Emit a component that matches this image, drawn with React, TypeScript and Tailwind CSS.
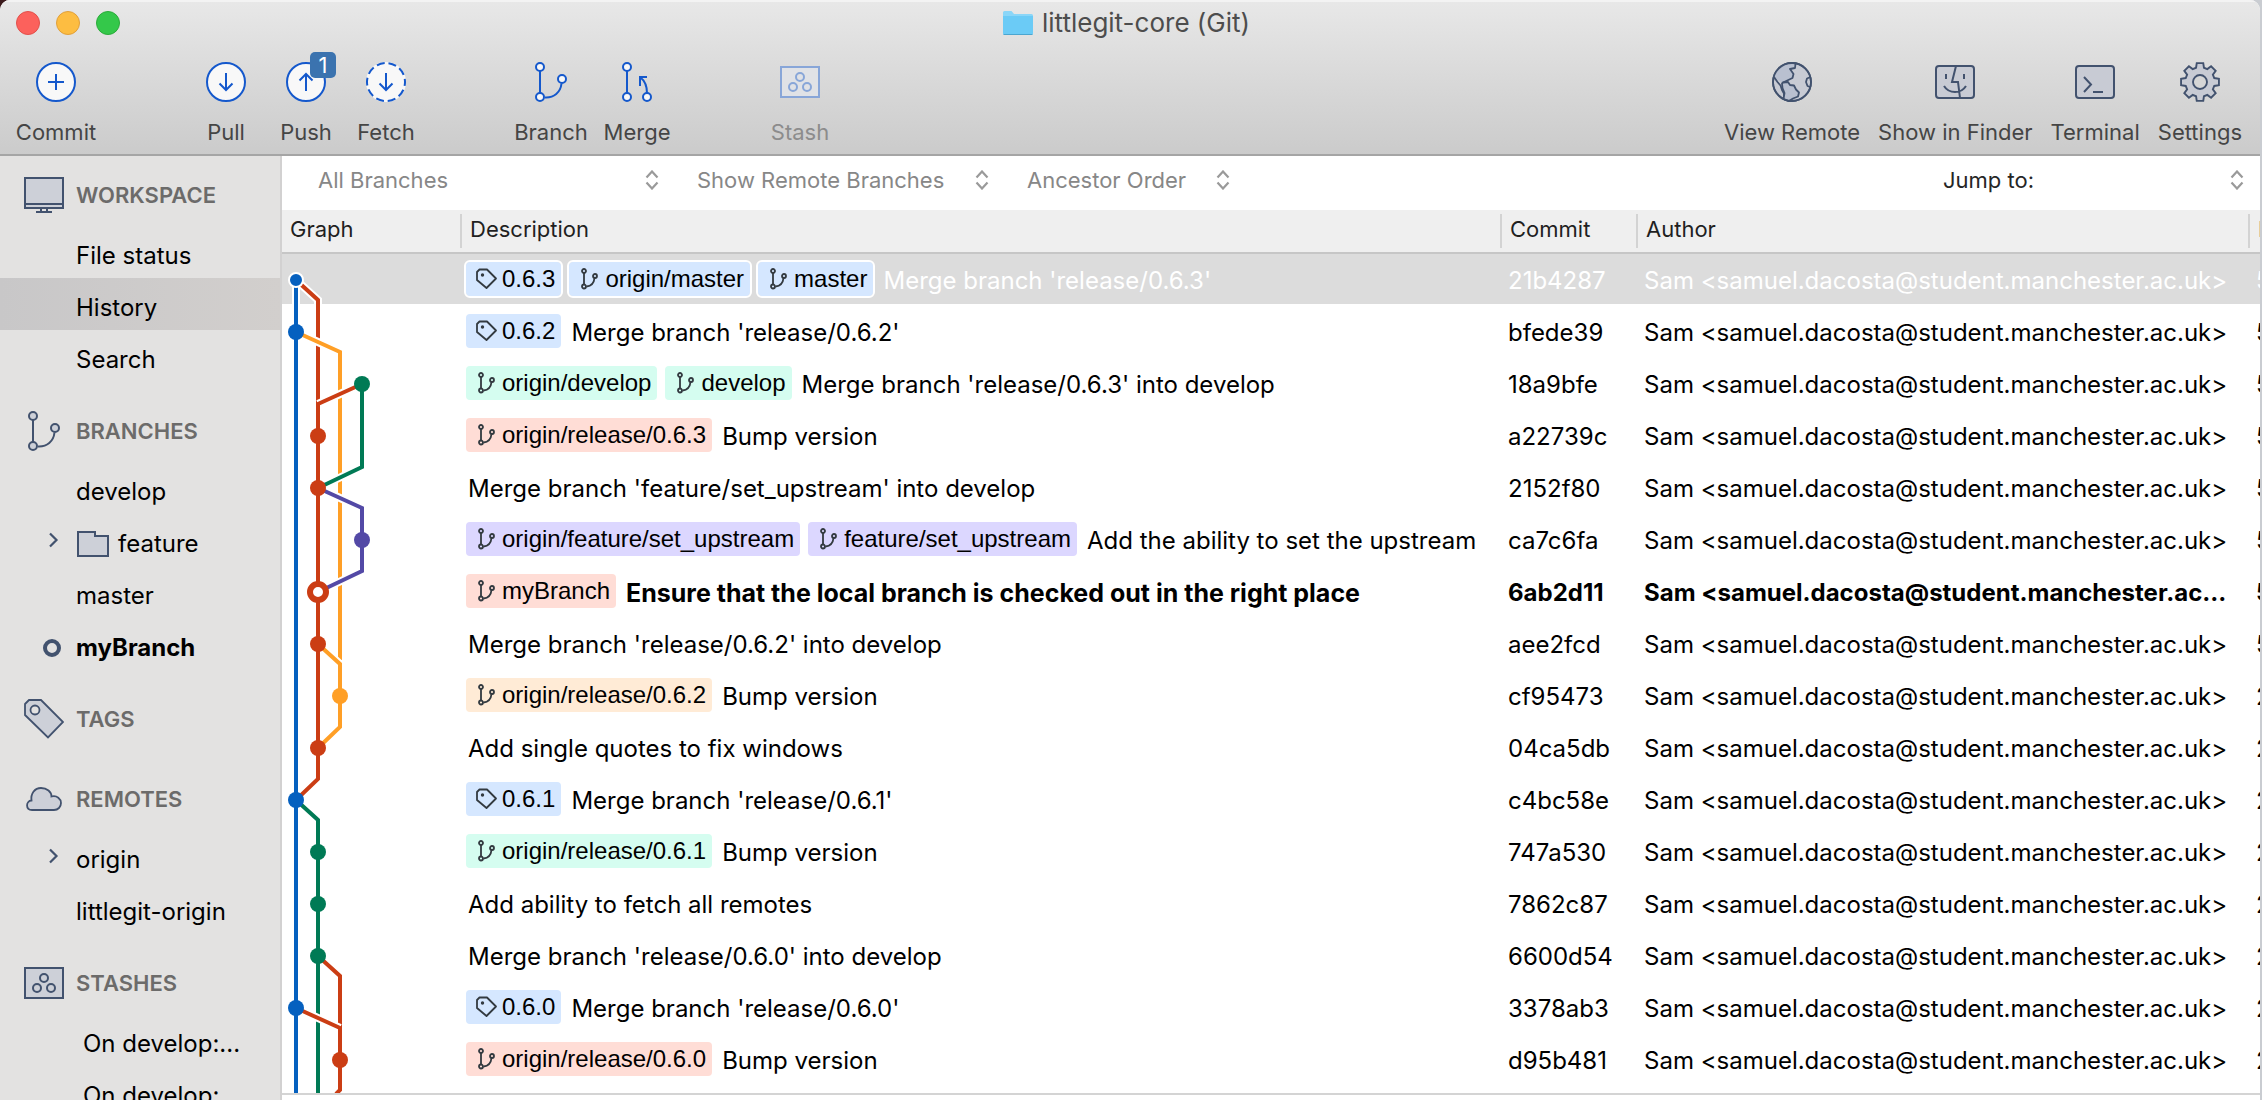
import React from "react";

type Tone = "blue" | "green" | "red" | "purple" | "orange";
type Ref = { kind: "tag" | "branch"; name: string };
type Commit = {
  refs: Ref[];
  tone?: Tone;
  message: string;
  hash: string;
  date: string;
  author?: string;
  selected?: boolean;
  head?: boolean;
};

const toneClass: Record<Tone, string> = {
  blue: "bg-[#d5e7ff]",
  green: "bg-[#d5fdf0]",
  red: "bg-[#ffddd6]",
  purple: "bg-[#dcd7ff]",
  orange: "bg-[#ffebd6]",
};

const AUTHOR = "Sam <samuel.dacosta@student.manchester.ac.uk>";
const branch = (name: string): Ref => ({ kind: "branch", name });
const tag = (name: string): Ref => ({ kind: "tag", name });

const commits: Commit[] = [
  { refs: [tag("0.6.3"), branch("origin/master"), branch("master")], tone: "blue", message: "Merge branch 'release/0.6.3'", hash: "21b4287", date: "5", selected: true },
  { refs: [tag("0.6.2")], tone: "blue", message: "Merge branch 'release/0.6.2'", hash: "bfede39", date: "5" },
  { refs: [branch("origin/develop"), branch("develop")], tone: "green", message: "Merge branch 'release/0.6.3' into develop", hash: "18a9bfe", date: "5" },
  { refs: [branch("origin/release/0.6.3")], tone: "red", message: "Bump version", hash: "a22739c", date: "5" },
  { refs: [], message: "Merge branch 'feature/set_upstream' into develop", hash: "2152f80", date: "5" },
  { refs: [branch("origin/feature/set_upstream"), branch("feature/set_upstream")], tone: "purple", message: "Add the ability to set the upstream", hash: "ca7c6fa", date: "5" },
  { refs: [branch("myBranch")], tone: "red", message: "Ensure that the local branch is checked out in the right place", hash: "6ab2d11", date: "5", author: "Sam <samuel.dacosta@student.manchester.ac...", head: true },
  { refs: [], message: "Merge branch 'release/0.6.2' into develop", hash: "aee2fcd", date: "5" },
  { refs: [branch("origin/release/0.6.2")], tone: "orange", message: "Bump version", hash: "cf95473", date: "2" },
  { refs: [], message: "Add single quotes to fix windows", hash: "04ca5db", date: "2" },
  { refs: [tag("0.6.1")], tone: "blue", message: "Merge branch 'release/0.6.1'", hash: "c4bc58e", date: "2" },
  { refs: [branch("origin/release/0.6.1")], tone: "green", message: "Bump version", hash: "747a530", date: "2" },
  { refs: [], message: "Add ability to fetch all remotes", hash: "7862c87", date: "2" },
  { refs: [], message: "Merge branch 'release/0.6.0' into develop", hash: "6600d54", date: "2" },
  { refs: [tag("0.6.0")], tone: "blue", message: "Merge branch 'release/0.6.0'", hash: "3378ab3", date: "2" },
  { refs: [branch("origin/release/0.6.0")], tone: "red", message: "Bump version", hash: "d95b481", date: "2" },
];

/* ---------- icons ---------- */

const BLUE = "#1458cc";
const SLATE = "#42526e";
const FILL = "#cdd0d8";

function CircleIcon({ d, dashed }: { d: string; dashed?: boolean }) {
  return (
    <svg width="40" height="40" viewBox="0 0 40 40" fill="none" stroke={BLUE} strokeWidth="2">
      <circle cx="20" cy="20" r="19" fill="#f8f8f8" stroke={dashed ? "#f8f8f8" : BLUE} />
      {dashed && <circle cx="20" cy="20" r="19" strokeDasharray="8 3.94" strokeDashoffset="4" />}
      <path d={d} />
    </svg>
  );
}

const PLUS = "M20 12v16M12 20h16";
const DOWN = "M20 11v17M13.500 21.500l6.500 6.500 6.500-6.500";
const UP = "M20 29v-17M13.500 18.500l6.500-6.500 6.500 6.500";

function BranchIcon({ color, fill }: { color: string; fill: string }) {
  return (
    <svg width="32" height="40" viewBox="0 0 32 40" fill="none" stroke={color} strokeWidth="2">
      <path d="M5 9v22M10 35.500c9 .5 15.500-5 16.500-14" />
      <circle cx="5" cy="5" r="4" fill={fill} />
      <circle cx="5" cy="35" r="4" fill={fill} />
      <circle cx="27" cy="17" r="4" fill={fill} />
    </svg>
  );
}

function MergeIcon() {
  return (
    <svg width="30" height="40" viewBox="0 0 30 40" fill="none" stroke={BLUE} strokeWidth="2">
      <path d="M5 9v22M25 31c0-6-2-12-6.500-15.500M18 24v-9h7" />
      <circle cx="5" cy="5" r="4" fill="#f8f8f8" />
      <circle cx="5" cy="35" r="4" fill="#f8f8f8" />
      <circle cx="25" cy="35" r="4" fill="#f8f8f8" />
    </svg>
  );
}

function StashIcon({ color, fill }: { color: string; fill: string }) {
  return (
    <svg width="40" height="32" viewBox="0 0 40 32" fill="none" stroke={color} strokeWidth="2">
      <rect x="1" y="1" width="38" height="30" fill={fill} />
      <circle cx="20" cy="11" r="4" />
      <circle cx="13" cy="21" r="4" />
      <circle cx="27" cy="21" r="4" />
    </svg>
  );
}

function GlobeIcon() {
  return (
    <svg width="40" height="40" viewBox="0 0 40 40" fill="none" stroke={SLATE} strokeWidth="1.800" strokeLinejoin="round">
      <circle cx="20" cy="20" r="19" fill="#c8cbd4" />
      <path d="M22.500 1.500l-1 5-3 1.500 3.500 4-1.500 4-9 5 2.500 1.500C9 19 4.500 18.500 2 14 5 6 12 1 22.500 1.500z" fill="#b9c0d0" stroke="none" />
      <path d="M23.500 1.500l-.5 4.500-5 1 3.500 5-1 4-9.500 4.500" />
      <path d="M2 15l3.500 5 3 3.500 1.500 4.500 2 3.500v6.500" />
      <path d="M11 20.500l5-.5 2 3 4 .5 2 4 3 3-1 4-5 2-4 2.500-5.500-2 1-6-2-5-.5-4.500z" fill="#b9c0d0" />
      <path d="M38.500 15l-3.500 1.500-1 3.500 1.500 4 2.500 1" />
      <circle cx="20" cy="20" r="19" />
    </svg>
  );
}

function FinderIcon() {
  return (
    <svg width="40" height="34" viewBox="0 0 40 34" fill="none" stroke={SLATE} strokeWidth="2">
      <rect x="1" y="1" width="38" height="32" rx="3" fill="#c8cbd4" />
      <path d="M11 9v5M29 9v5M21 1l-4 16h6l2 16M9 21c5 8 17 8 22 0" />
    </svg>
  );
}

function TerminalIcon() {
  return (
    <svg width="40" height="34" viewBox="0 0 40 34" fill="none" stroke={SLATE} strokeWidth="2">
      <rect x="1" y="1" width="38" height="32" rx="3" fill="#c8cbd4" />
      <path d="M9 12l7 7.500-7 7.500M18 27h10" />
    </svg>
  );
}

function gearPath() {
  const pts: string[] = [];
  for (let i = 0; i < 8; i++) {
    const base = (i * Math.PI) / 4;
    for (const [off, r] of [[-0.27, 14.8], [-0.17, 19.2], [0.17, 19.2], [0.27, 14.8]]) {
      pts.push(`${(20 + r * Math.sin(base + off)).toFixed(2)} ${(20 - r * Math.cos(base + off)).toFixed(2)}`);
    }
  }
  return `M${pts.join("L")}Z`;
}

function GearIcon() {
  return (
    <svg width="40" height="40" viewBox="0 0 40 40" fill="#c8cbd4" stroke={SLATE} strokeWidth="1.900">
      <path d={gearPath()} />
      <circle cx="20" cy="20" r="7" fill="#d6d6d6" />
    </svg>
  );
}

function MonitorIcon() {
  return (
    <svg width="40" height="36" viewBox="0 0 40 36" fill="none" stroke={SLATE} strokeWidth="2">
      <rect x="1" y="1" width="38" height="30" fill={FILL} />
      <path d="M1 27h38M17 31v3M23 31v3M12 35h16" />
    </svg>
  );
}

function TagIcon() {
  return (
    <svg width="40" height="40" viewBox="0 0 40 40" fill="none" stroke={SLATE} strokeWidth="1.800">
      <path d="M1 5l4-4h12l22 22-15 15.500L1 16z" fill={FILL} />
      <circle cx="11" cy="11" r="4.500" fill="#e3e2e1" />
    </svg>
  );
}

function CloudIcon() {
  return (
    <svg width="36" height="24" viewBox="0 0 36 24" fill="none" stroke={SLATE} strokeWidth="1.800">
      <path d="M5.500 13.500C4.500 7 8.500 1 15 1c6 0 10.500 4 10.500 8.500C31 8 35 12 35 16s-3 7-7 7H6c-6.500 0-6.500-9-.5-9.500z" fill={FILL} />
    </svg>
  );
}

function FolderOutline() {
  return (
    <svg className="mr-2 shrink-0" width="34" height="28" viewBox="0 0 34 28" fill={FILL} stroke={SLATE} strokeWidth="2">
      <path d="M2 26V2h17v4h13v20z" />
    </svg>
  );
}

function TitleFolder() {
  return (
    <svg width="32" height="26" viewBox="0 0 32 26">
      <path d="M1 2.500Q1 1 2.500 1h7l2.500 3h17.500Q31 4 31 5.500V23q0 1.500-1.500 1.500h-27Q1 24.500 1 23z" fill="#8ad6f8" />
      <path d="M1 6h30v17q0 1.500-1.500 1.500h-27Q1 24.500 1 23z" fill="#6bcbf6" />
      <path d="M1.500 24.500h29" stroke="#4ba6d0" />
    </svg>
  );
}

function Chevron() {
  return (
    <svg className="mr-[17px] mb-2" width="10" height="16" viewBox="0 0 10 16" fill="none" stroke={SLATE} strokeWidth="2.200">
      <path d="M1 1.500l6.500 6.500L1 14.500" />
    </svg>
  );
}

function UpDown() {
  return (
    <svg className="pointer-events-none absolute right-0 top-1/2 -translate-y-1/2" width="14" height="20" viewBox="0 0 14 20" fill="none" stroke="#9a9a9a" strokeWidth="2.200">
      <path d="M1.500 7.500L7 1.500l5.500 6M1.500 12.500L7 18.500l5.500-6" />
    </svg>
  );
}

function BadgeTag() {
  return (
    <svg width="22" height="22" viewBox="0 0 22 22" fill="none" stroke="#333a40" strokeWidth="1.800">
      <path d="M1 4l2.500-2.500H11l9 9L10.500 20 1 12z" strokeLinejoin="round" />
      <circle cx="6.500" cy="7" r="1.700" fill="#333a40" stroke="none" />
    </svg>
  );
}

function BadgeBranch() {
  return (
    <svg width="22" height="22" viewBox="0 0 22 22" fill="none" stroke="#333a40" strokeWidth="1.800">
      <path d="M5 5v11M7.500 18.500c5-.5 7.500-3 8-8.500" />
      <circle cx="5" cy="3" r="2" />
      <circle cx="5" cy="18.500" r="2" />
      <circle cx="16" cy="8" r="2" />
    </svg>
  );
}

/* ---------- commit graph ---------- */

const LANE = [14, 36, 58, 80];
const rowY = (n: number) => 28 + 52 * n;
const C = { blue: "#0560bf", red: "#cb3d14", orange: "#ff9f26", green: "#007a55", purple: "#5349a6" };

const edges: { d: string; color: string; halo?: string }[] = [
  { d: "M14 28V842", color: C.blue, halo: "M14 28V52" },
  { d: "M14 28L36 48V496", color: C.red, halo: "M14 28L36 48V52" },
  { d: "M36 496V527L14 548", color: C.red },
  { d: "M14 80L58 100V408", color: C.orange, halo: "M14 80L58 100" },
  { d: "M80 132L36 152V180", color: C.red, halo: "M80 132L36 152" },
  { d: "M80 132V215L36 236", color: C.green, halo: "M80 215L36 236" },
  { d: "M36 236L80 256V319L36 340", color: C.purple, halo: "M36 236L80 256M80 319L36 340" },
  { d: "M36 236V496", color: C.red },
  { d: "M36 392L58 412V475L36 496", color: C.orange, halo: "M36 392L58 412" },
  { d: "M36 300V496", color: C.red },
  { d: "M14 548L36 568V842", color: C.green },
  { d: "M36 704L58 724V820", color: C.red },
  { d: "M14 756L58 776V838L54 842", color: C.red, halo: "M14 756L58 776" },
  { d: "M14 60V842", color: C.blue },
];

const nodes: [number, string][] = [
  [0, C.blue], [0, C.blue], [3, C.green], [1, C.red], [1, C.red], [3, C.purple], [1, C.red], [1, C.red],
  [2, C.orange], [1, C.red], [0, C.blue], [1, C.green], [1, C.green], [1, C.green], [0, C.blue], [2, C.red],
];

function Graph() {
  return (
    <svg className="pointer-events-none absolute left-0 top-0" width="100" height="841" viewBox="0 0 100 841" fill="none">
      {edges.map((e, i) => (
        <g key={i}>
          {e.halo && <path d={e.halo} stroke="#fff" strokeWidth="8" />}
          <path d={e.d} stroke={e.color} strokeWidth="4" />
        </g>
      ))}
      <path d="M14 28V60" stroke={C.blue} strokeWidth="4" />
      {nodes.map(([lane, color], n) => {
        if (n === 0) return <circle key={n} cx={LANE[lane]} cy={rowY(n)} r="7" fill={color} stroke="#fff" strokeWidth="2" />;
        if (n === 6) return <circle key={n} cx={LANE[lane]} cy={rowY(n)} r="8" fill="#fff" stroke={color} strokeWidth="6" />;
        return <circle key={n} cx={LANE[lane]} cy={rowY(n)} r="8" fill={color} />;
      })}
    </svg>
  );
}

/* ---------- parts ---------- */

function Tool({ label, width = "", disabled, badge, children }: { label: string; width?: string; disabled?: boolean; badge?: string; children: React.ReactNode }) {
  return (
    <button type="button" disabled={disabled} className={`flex flex-col items-center ${width} ${disabled ? "text-[#8c8c8c]" : "text-[#454545]"}`}>
      <span className="relative flex h-10 items-center">
        {children}
        {badge && (
          <span className="absolute -right-[10px] -top-[10px] flex h-[26px] w-[26px] items-center justify-center rounded-[5px] bg-[#3b73af] text-[22px] leading-none text-white">{badge}</span>
        )}
      </span>
      <span className="mt-[15px] whitespace-nowrap text-[22px] leading-[30px]">{label}</span>
    </button>
  );
}

function Filter({ label, width }: { label: string; width: string }) {
  return (
    <div className={`relative ${width}`}>
      <select aria-label={label} className="block w-full appearance-none bg-transparent text-[22px] leading-[30px] text-[#878787] outline-none">
        <option>{label}</option>
      </select>
      <UpDown />
    </div>
  );
}

function Section({ title, icon, className, children }: { title: string; icon: React.ReactNode; className: string; children?: React.ReactNode }) {
  return (
    <section className={className}>
      <h2 className="flex h-[62px] items-center text-[22px] font-semibold text-[#6c6b6a]">
        <span className="flex w-[76px] items-center justify-center pr-3 pl-6">
          <span className="flex w-10 shrink-0 justify-center">{icon}</span>
        </span>
        {title}
      </h2>
      <ul>{children}</ul>
    </section>
  );
}

function Item({ label, marker, folder, active, bold, indent }: { label: string; marker?: React.ReactNode; folder?: boolean; active?: boolean; bold?: boolean; indent?: boolean }) {
  return (
    <li>
      <button type="button" className={`flex h-[52px] w-full items-center pt-[7px] text-left text-[24px] leading-[30px] text-black ${active ? "bg-linear-to-r from-[#c8c7c8] to-[#d2cfcd]" : ""} ${bold ? "font-bold" : ""}`}>
        <span className={`flex shrink-0 justify-end ${indent ? "w-[83px]" : "w-[76px]"}`}>{marker}</span>
        {folder && <FolderOutline />}
        <span className="whitespace-nowrap">{label}</span>
      </button>
    </li>
  );
}

function Badge({ item, tone, selected }: { item: Ref; tone: Tone; selected?: boolean }) {
  return (
    <span className={`mr-2 flex h-[34px] shrink-0 items-center rounded-[4px] pl-[10px] pr-[6px] font-['Liberation_Sans',sans-serif] text-[24px] font-normal leading-none text-black ${toneClass[tone]} ${selected ? "outline-2 outline-white" : ""}`}>
      <span className="mr-1">{item.kind === "tag" ? <BadgeTag /> : <BadgeBranch />}</span>
      {item.name}
    </span>
  );
}

export default function App() {
  return (
    <div className="h-screen overflow-hidden bg-linear-to-r from-[#3b1a1c] from-1% to-[#c9ccd1] to-2% pr-[2px] font-['Inter',sans-serif]">
      <div className="flex h-full flex-col overflow-hidden rounded-t-[10px] bg-white">
        <header className="h-[156px] shrink-0 border-b-2 border-[#a5a5a5] bg-linear-to-b from-[#e8e8e8] to-[#cbcbcb] shadow-[inset_0_2px_0_#f3f3f3]">
          <div className="relative flex h-[46px] items-center justify-center">
            <div className="absolute left-4 flex gap-4">
              <button type="button" aria-label="Close" className="h-6 w-6 rounded-full border border-[#e2504b] bg-[#fc615c]" />
              <button type="button" aria-label="Minimize" className="h-6 w-6 rounded-full border border-[#e1a03a] bg-[#fdbd41]" />
              <button type="button" aria-label="Zoom" className="h-6 w-6 rounded-full border border-[#2bab3a] bg-[#34c84a]" />
            </div>
            <h1 className="flex items-center gap-2 pr-2 text-[26px] leading-[30px] text-[#4d4d4d]">
              <TitleFolder />
              littlegit-core (Git)
            </h1>
          </div>
          <div className="flex pl-4 pr-[18px] pt-4">
            <Tool label="Commit" width="w-20"><CircleIcon d={PLUS} /></Tool>
            <div className="ml-[90px] flex">
              <Tool label="Pull" width="w-20"><CircleIcon d={DOWN} /></Tool>
              <Tool label="Push" width="w-20" badge="1"><CircleIcon d={UP} /></Tool>
              <Tool label="Fetch" width="w-20"><CircleIcon d={DOWN} dashed /></Tool>
            </div>
            <div className="ml-[82px] flex">
              <Tool label="Branch" width="w-[86px]"><BranchIcon color={BLUE} fill="#f8f8f8" /></Tool>
              <Tool label="Merge" width="w-[86px]"><MergeIcon /></Tool>
            </div>
            <div className="ml-20 flex">
              <Tool label="Stash" width="w-20" disabled><StashIcon color="#88a6d8" fill="#e0e2e6" /></Tool>
            </div>
            <div className="ml-auto flex gap-[18px]">
              <Tool label="View Remote"><GlobeIcon /></Tool>
              <Tool label="Show in Finder"><FinderIcon /></Tool>
              <Tool label="Terminal"><TerminalIcon /></Tool>
              <Tool label="Settings"><GearIcon /></Tool>
            </div>
          </div>
        </header>

        <div className="flex min-h-0 flex-1">
          <nav className="w-[282px] shrink-0 overflow-hidden border-r-2 border-[#d2d1d1] bg-[#e3e2e1]">
            <Section title="WORKSPACE" icon={<MonitorIcon />} className="pt-2">
              <Item label="File status" />
              <Item label="History" active />
              <Item label="Search" />
            </Section>
            <Section title="BRANCHES" icon={<BranchIcon color={SLATE} fill={FILL} />} className="pt-[18px]">
              <Item label="develop" />
              <Item label="feature" folder marker={<Chevron />} />
              <Item label="master" />
              <Item label="myBranch" bold marker={<span className="mr-[15px] h-[18px] w-[18px] rounded-full border-4 border-[#42526e]" />} />
            </Section>
            <Section title="TAGS" icon={<TagIcon />} className="pt-[18px]" />
            <Section title="REMOTES" icon={<CloudIcon />} className="pt-[18px]">
              <Item label="origin" marker={<Chevron />} />
              <Item label="littlegit-origin" />
            </Section>
            <Section title="STASHES" icon={<StashIcon color={SLATE} fill={FILL} />} className="pt-[18px]">
              <Item label="On develop:..." indent />
              <Item label="On develop:" indent />
            </Section>
          </nav>

          <main className="flex min-w-0 flex-1 flex-col pb-[5px]">
            <div className="flex h-[54px] shrink-0 items-center gap-[38px] pb-[6px] pl-9 pr-4">
              <Filter label="All Branches" width="w-[341px]" />
              <Filter label="Show Remote Branches" width="w-[292px]" />
              <Filter label="Ancestor Order" width="w-[203px]" />
              <div className="ml-auto flex text-[22px] leading-[30px] text-[#262626]">
                <label htmlFor="jump">Jump to:</label>
                <div className="relative w-[210px]">
                  <select id="jump" className="block w-full appearance-none bg-transparent outline-none">
                    <option value=""></option>
                  </select>
                  <UpDown />
                </div>
              </div>
            </div>

            <div className="relative min-h-0 flex-1 overflow-hidden border-b-2 border-[#d4d4d4]">
              <table className="w-full table-fixed border-collapse text-left text-[24px] leading-[30px] text-black">
                <colgroup>
                  <col className="w-[180px]" />
                  <col />
                  <col className="w-[136px]" />
                  <col className="w-[612px]" />
                  <col className="w-[10px]" />
                </colgroup>
                <thead className="relative z-10 bg-[#efefef] text-[22px] text-[#1f1f1f] shadow-[0_2px_0_#c6c6c6]">
                  <tr className="h-[42px]">
                    {["Graph", "Description", "Commit", "Author", "Date"].map((h, i) => (
                      <th key={h} scope="col" className="overflow-hidden whitespace-nowrap p-0 font-normal">
                        <div className={`flex h-[34px] items-center overflow-hidden pb-1 pl-2 ${i < 4 ? "border-r-2 border-[#d3d3d3]" : ""}`}>{h}</div>
                      </th>
                    ))}
                  </tr>
                </thead>
                <tbody>
                  {commits.map((c) => (
                    <tr key={c.hash} className={`h-[52px] ${c.selected ? "bg-[#dcdcdc] text-white" : ""} ${c.head ? "font-bold" : ""}`}>
                      <td className="p-0" />
                      <td className="overflow-hidden p-0 pl-1 pt-[2px]">
                        <div className="flex items-center whitespace-nowrap">
                          {c.refs.map((r) => (
                            <Badge key={r.name} item={r} tone={c.tone ?? "blue"} selected={c.selected} />
                          ))}
                          <span className={`truncate pl-[2px] pt-1 ${c.head ? "text-[25px]" : ""}`}>{c.message}</span>
                        </div>
                      </td>
                      <td className="overflow-hidden whitespace-nowrap p-0 pl-[6px] pt-[6px]">{c.hash}</td>
                      <td className="truncate p-0 pl-[6px] pt-[6px]">{c.author ?? AUTHOR}</td>
                      <td className="overflow-hidden whitespace-nowrap p-0 pl-[6px] pt-[6px]">{c.date}</td>
                    </tr>
                  ))}
                </tbody>
              </table>
              <div className="absolute left-0 top-[42px]">
                <Graph />
              </div>
            </div>
          </main>
        </div>
      </div>
    </div>
  );
}
